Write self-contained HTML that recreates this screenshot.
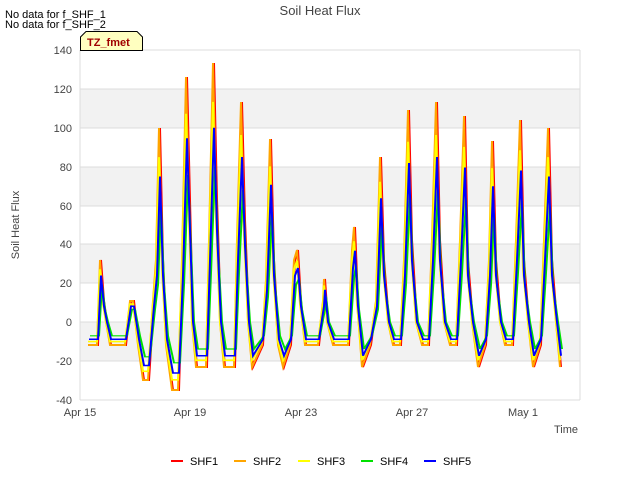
<!DOCTYPE html>
<html><head><meta charset="utf-8"><style>
body{margin:0;background:#fff;}
svg{display:block;font-family:"Liberation Sans",sans-serif;}
</style></head><body>
<svg width="640" height="480" viewBox="0 0 640 480">
<rect width="640" height="480" fill="#fff"/>
<rect x="80" y="50" width="500" height="350" fill="#fff"/>
<rect x="80" y="89" width="500" height="39" fill="#f2f2f2"/>
<rect x="80" y="167" width="500" height="39" fill="#f2f2f2"/>
<rect x="80" y="244" width="500" height="39" fill="#f2f2f2"/>
<rect x="80" y="322" width="500" height="39" fill="#f2f2f2"/>
<g stroke="#dcdcdc" stroke-width="1">
<line x1="80" x2="580" y1="50" y2="50"/><line x1="80" x2="580" y1="89" y2="89"/><line x1="80" x2="580" y1="128" y2="128"/><line x1="80" x2="580" y1="167" y2="167"/><line x1="80" x2="580" y1="206" y2="206"/><line x1="80" x2="580" y1="244" y2="244"/><line x1="80" x2="580" y1="283" y2="283"/><line x1="80" x2="580" y1="322" y2="322"/><line x1="80" x2="580" y1="361" y2="361"/><line x1="80" x2="580" y1="400" y2="400"/>
<line x1="80" x2="80" y1="50" y2="400"/><line x1="580" x2="580" y1="50" y2="400"/>
</g>
<defs>
<polyline id="p" fill="none" points="88,345 97,345 100,260 103,301 106,322 110,345 125,345 130,301 133,301 138,345 143,380 148,380 153,301 156,260 159,128 162,260 166,345 172,390 178,390 182,260 186,77 189,200 192,322 196,367 206,367 209,240 213,63 216,200 220,322 224,367 234,367 237,240 241,102 244,220 248,322 252,367 262,345 266,280 270,139 273,260 278,345 283,367 290,345 294,260 297,250 300,301 305,345 318,345 323,301 324,279 327,322 333,345 348,345 352,250 354,227 357,301 362,367 370,345 376,301 380,157 383,260 388,322 393,345 400,345 404,260 408,110 411,240 416,322 422,345 428,345 432,240 436,102 439,240 444,322 450,345 456,345 460,240 464,116 467,260 472,322 478,367 485,345 489,260 492,141 495,260 500,322 505,345 512,345 516,240 520,120 523,260 528,322 533,367 540,345 544,240 548,128 551,260 556,322 560,367"/>
</defs>
<use href="#p" stroke="#ff0000" stroke-width="2" transform="translate(1,0)"/>
<use href="#p" stroke="#ffa500" stroke-width="2"/>
<g transform="translate(0,48.3) scale(1,0.85)"><use href="#p" stroke="#ffff00" stroke-width="2" style="vector-effect:non-scaling-stroke"/></g>
<g transform="translate(2,128.8) scale(1,0.6)"><use href="#p" stroke="#00e000" stroke-width="2" style="vector-effect:non-scaling-stroke"/></g>
<g transform="translate(1,80.5) scale(1,0.75)"><use href="#p" stroke="#0000ff" stroke-width="2" style="vector-effect:non-scaling-stroke"/></g>
<g font-size="11" fill="#444" text-anchor="end">
<text x="72" y="54">140</text><text x="72" y="93">120</text><text x="72" y="132">100</text><text x="72" y="171">80</text><text x="72" y="210">60</text><text x="72" y="248">40</text><text x="72" y="287">20</text><text x="72" y="326">0</text><text x="72" y="365">-20</text><text x="72" y="404">-40</text>
</g>
<g font-size="11" fill="#444" text-anchor="middle">
<text x="80" y="416">Apr 15</text><text x="190" y="416">Apr 19</text><text x="301" y="416">Apr 23</text><text x="412" y="416">Apr 27</text><text x="523" y="416">May 1</text>
</g>
<text x="578" y="433" font-size="11" fill="#444" text-anchor="end">Time</text>
<text x="19" y="225" font-size="11" fill="#444" text-anchor="middle" transform="rotate(-90 19 225)">Soil Heat Flux</text>
<text x="320" y="15" font-size="13" fill="#444" text-anchor="middle">Soil Heat Flux</text>
<text x="5" y="18" font-size="11" fill="#000">No data for f_SHF_1</text>
<text x="5" y="28" font-size="11" fill="#000">No data for f_SHF_2</text>
<path d="M80.5,50.5 V37 L86,31.5 H137 L142.5,37 V50.5 Z" fill="#ffffc0" stroke="#000" stroke-width="1"/>
<text x="87" y="46" font-size="11" font-weight="bold" fill="#a00000">TZ_fmet</text>
<g font-size="11" fill="#000">
<line x1="171" x2="183" y1="461" y2="461" stroke="#ff0000" stroke-width="2"/><text x="190" y="465">SHF1</text>
<line x1="234" x2="246" y1="461" y2="461" stroke="#ffa500" stroke-width="2"/><text x="253" y="465">SHF2</text>
<line x1="298" x2="310" y1="461" y2="461" stroke="#ffff00" stroke-width="2"/><text x="317" y="465">SHF3</text>
<line x1="361" x2="373" y1="461" y2="461" stroke="#00e000" stroke-width="2"/><text x="380" y="465">SHF4</text>
<line x1="424" x2="436" y1="461" y2="461" stroke="#0000ff" stroke-width="2"/><text x="443" y="465">SHF5</text>
</g>
</svg>
</body></html>
